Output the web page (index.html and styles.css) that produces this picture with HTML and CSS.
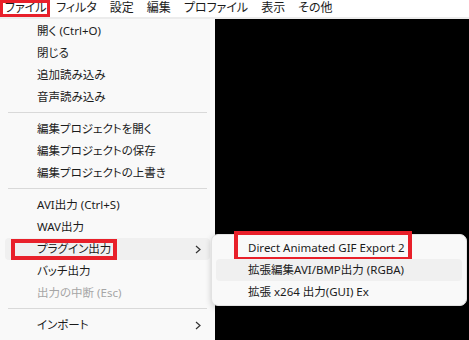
FILE: index.html
```html
<!DOCTYPE html>
<html lang="ja">
<head>
    <meta charset="UTF-8">
    <title>AviUtl メニュー</title>
    <link rel="stylesheet" href="styles.css">
</head>
<body>

    <div class="menubar">
        <span class="bar-item marked">ファイル</span>
        <span class="bar-item">フィルタ</span>
        <span class="bar-item">設定</span>
        <span class="bar-item">編集</span>
        <span class="bar-item">プロファイル</span>
        <span class="bar-item">表示</span>
        <span class="bar-item">その他</span>
    </div>

    <div class="workspace">
        <div class="menu">
            <div class="item">開く (Ctrl+O)</div>
            <div class="item">閉じる</div>
            <div class="item">追加読み込み</div>
            <div class="item">音声読み込み</div>
            <div class="sep"></div>
            <div class="item">編集プロジェクトを開く</div>
            <div class="item">編集プロジェクトの保存</div>
            <div class="item">編集プロジェクトの上書き</div>
            <div class="sep"></div>
            <div class="item">AVI出力 (Ctrl+S)</div>
            <div class="item">WAV出力</div>
            <div class="item hover">
                <span class="mark mark-plugin"></span>
                プラグイン出力
                <svg class="arrow" width="6" height="9" viewBox="0 0 6 9"><path d="M1 1 L5 4.5 L1 8" fill="none" stroke="#333" stroke-width="1.2"/></svg>
                <div class="submenu">
                    <div class="item">
                        <span class="mark mark-gif"></span>
                        Direct Animated GIF Export 2
                    </div>
                    <div class="item hover">拡張編集AVI/BMP出力 (RGBA)</div>
                    <div class="item">拡張 x264 出力(GUI) Ex</div>
                </div>
            </div>
            <div class="item">バッチ出力</div>
            <div class="item disabled">出力の中断 (Esc)</div>
            <div class="sep"></div>
            <div class="item">インポート<svg class="arrow" width="6" height="9" viewBox="0 0 6 9"><path d="M1 1 L5 4.5 L1 8" fill="none" stroke="#333" stroke-width="1.2"/></svg></div>
            <div class="item">エクスポート</div>
        </div>
        <div class="preview"></div>
    </div>

</body>
</html>
```

FILE: styles.css
```css
body { margin: 0; background: #000; font-family: "Noto Sans", "Noto Sans CJK JP", sans-serif; font-size: 11.5px; color: #1b1b1b; font-feature-settings: "palt"; height: 340px; overflow: hidden; }

.menubar { display: flex; height: 17px; background: #fff; border-bottom: 2px solid #ececec; line-height: 16px; font-size: 12px; }
.bar-item { padding: 0 6.5px; }
.bar-item.marked { outline: 3px solid #e8202a; outline-offset: -3px; padding: 0 3px 0 5px; }

.workspace { display: flex; height: 321px; }
.menu { width: 215px; background: #f9f9f9; padding-top: 1px; }
.preview { flex: 1; background: #000; }

.item { position: relative; height: 22px; line-height: 22px; padding-left: 32px; margin: 0 5px; white-space: nowrap; }
.item.hover { background: #f0f0f0; border-radius: 4px; }
.item.disabled { color: #a6a6a6; }
.arrow { position: absolute; right: 9px; top: 7px; }

.sep { height: 1px; background: #d9d9d9; margin: 4px 8px 5px 8px; }

.mark { position: absolute; border: 4px solid #e8202a; }
.mark-plugin { left: 6px; top: 1px; width: 98px; height: 13px; }

.submenu { position: absolute; left: 206px; top: -4px; width: 254px; padding: 2px 0; background: #f9f9f9; border: 1px solid #e2e2e2; border-radius: 7px; box-shadow: 0 2px 6px rgba(0, 0, 0, 0.18); }
.submenu .item { padding-left: 32px; margin: 0 4px; }
.mark-gif { left: 18px; top: -6px; width: 170px; height: 22px; }
```
